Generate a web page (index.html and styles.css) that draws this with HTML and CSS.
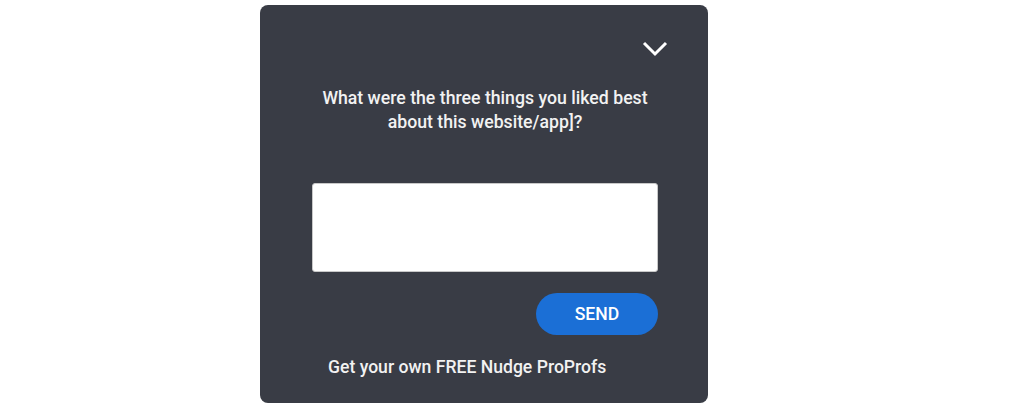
FILE: index.html
```html
<!DOCTYPE html>
<html lang="en">
<head>
    <meta charset="UTF-8">
    <meta name="viewport" content="width=device-width, initial-scale=1.0">
    <title>Nudge Survey</title>
    <link rel="stylesheet" href="styles.css">
</head>
<body>
    <div class="page">
        <section class="nudge">
            <div class="nudge-top">
                <button class="collapse-btn" aria-label="Minimize">
                    <svg width="26" height="16" viewBox="0 0 26 16">
                        <path d="M2 2 L13 13 L24 2" fill="none" stroke="#fff" stroke-width="3"/>
                    </svg>
                </button>
            </div>

            <h2 class="question">What were the three things you liked best about this website/app]?</h2>

            <textarea class="answer" aria-label="Your answer"></textarea>

            <div class="actions">
                <button class="send-btn">SEND</button>
            </div>

            <p class="promo">Get your own FREE Nudge ProProfs</p>
        </section>
    </div>
</body>
</html>
```

FILE: styles.css
```css
body {
    margin: 0;
    padding: 0;
    background-color: #fff;
    font-family: Roboto, "Liberation Sans", Arial, sans-serif;
}
.page {
    padding: 5px 0 0 260px;
}
.nudge {
    width: 448px;
    height: 398px;
    box-sizing: border-box;
    background-color: #393c45;
    border-radius: 8px;
    padding: 0 50px 0 52px;
    display: flex;
    flex-direction: column;
}
.nudge-top {
    display: flex;
    justify-content: flex-end;
    padding-top: 36px;
    margin-right: -10px;
}
.collapse-btn {
    background: none;
    border: none;
    padding: 0;
    width: 26px;
    height: 16px;
    cursor: pointer;
}
.collapse-btn svg {
    display: block;
}
.question {
    margin: 29px 0 0;
    color: #f2f2f2;
    font-size: 17.7px;
    font-weight: 500;
    line-height: 24px;
    text-align: center;
    padding: 0 10px;
}
.answer {
    margin-top: 49px;
    width: 100%;
    height: 89px;
    box-sizing: border-box;
    border: 1px solid #c8c8c8;
    border-radius: 3px;
    background-color: #fff;
    resize: none;
    font-family: inherit;
    font-size: 15px;
    padding: 8px;
}
.actions {
    display: flex;
    justify-content: flex-end;
    margin-top: 21px;
}
.send-btn {
    width: 122px;
    height: 42px;
    border: none;
    border-radius: 21px;
    background-color: #1b6fd6;
    color: #fff;
    font-family: inherit;
    font-size: 17.6px;
    font-weight: 500;
    cursor: pointer;
}
.promo {
    margin: 20px 0 0 16px;
    color: #f2f2f2;
    font-size: 17.6px;
    font-weight: 500;
    line-height: 24px;
}
```
